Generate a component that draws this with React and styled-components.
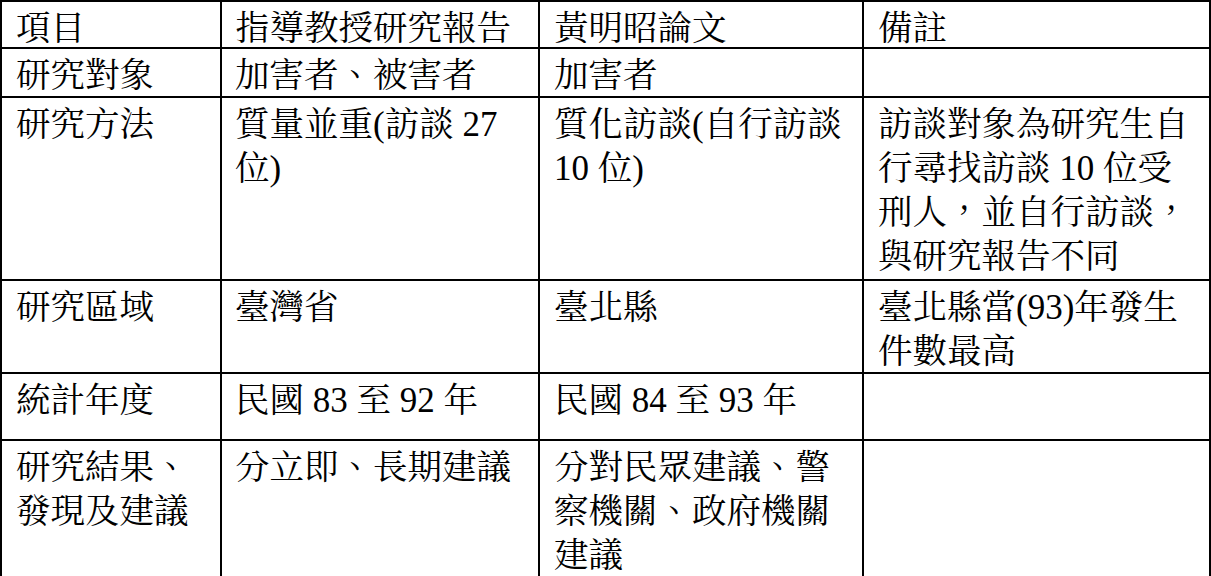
import React from "react";
import styled, { createGlobalStyle } from "styled-components";

const GlobalStyle = createGlobalStyle`
    html, body {
        margin: 0;
        padding: 0;
        background: #ffffff;
        overflow: hidden;
    }
`;

const Page = styled.div`
    width: 1211px;
    height: 576px;
    overflow: hidden;
    background: #ffffff;
`;

const Table = styled.div`
    display: grid;
    grid-template-columns: 218px 316px 322px 345px;
    grid-template-rows: 45px 47px 181px 91px 65px 140px;
    gap: 2px;
    padding: 2px;
    background: #000000;
    width: 1211px;
    box-sizing: border-box;
`;

const Cell = styled.div`
    background: #ffffff;
    padding: 1px 0 0 ${(props) => props.$indent}px;
    font-family: "Noto Serif CJK TC", "Noto Sans CJK TC", serif;
    font-size: 34.5px;
    line-height: 44px;
    color: #000000;
`;

const Line = styled.div`
    white-space: nowrap;
    height: 44px;
`;

const Latin = styled.span`
    font-family: "Liberation Serif", "Times New Roman", "DejaVu Serif", "Noto Serif", serif;
    font-size: 35px;
    line-height: 0;
`;

const rows = [
    [["項目"], ["指導教授研究報告"], ["黃明昭論文"], ["備註"]],
    [["研究對象"], ["加害者、被害者"], ["加害者"], []],
    [
        ["研究方法"],
        ["質量並重(訪談 27", "位)"],
        ["質化訪談(自行訪談", "10 位)"],
        ["訪談對象為研究生自", "行尋找訪談 10 位受", "刑人，並自行訪談，", "與研究報告不同"],
    ],
    [["研究區域"], ["臺灣省"], ["臺北縣"], ["臺北縣當(93)年發生", "件數最高"]],
    [["統計年度"], ["民國 83 至 92 年"], ["民國 84 至 93 年"], []],
    [["研究結果、", "發現及建議"], ["分立即、長期建議"], ["分對民眾建議、警", "察機關、政府機關", "建議"], []],
];

const indents = [14, 13, 14, 14];

// digits, brackets and spaces are set in the Times-like face
function renderLine(text) {
    return text.split(/([0-9() ]+)/).map((part, i) =>
        /^[0-9() ]+$/.test(part) ? <Latin key={i}>{part}</Latin> : part
    );
}

export default function App() {
    return (
        <Page>
            <GlobalStyle />
            <Table>
                {rows.map((row, r) =>
                    row.map((lines, c) => (
                        <Cell key={`${r}-${c}`} $indent={indents[c]}>
                            {lines.map((text, i) => (
                                <Line key={i}>{renderLine(text)}</Line>
                            ))}
                        </Cell>
                    ))
                )}
            </Table>
        </Page>
    );
}
